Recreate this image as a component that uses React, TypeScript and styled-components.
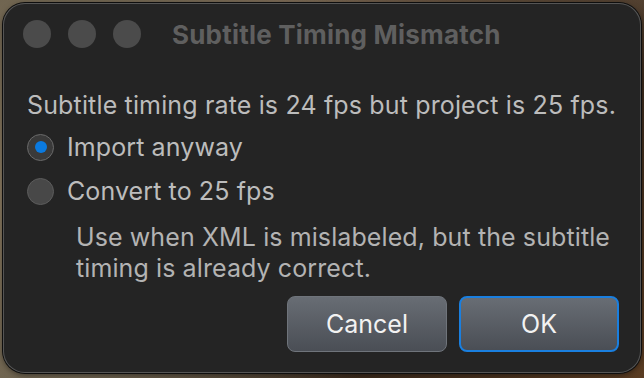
import React from "react";
import styled, { createGlobalStyle } from "styled-components";

const Global = createGlobalStyle`
  html, body { margin: 0; padding: 0; }
  body {
    width: 644px;
    height: 378px;
    overflow: hidden;
    background:
      radial-gradient(circle at 2% 50%, #8c7c62 0, #6f6450 30%, transparent 60%),
      radial-gradient(circle at 100% 100%, #5a3c22 0, #3b2a1c 40%, transparent 70%),
      linear-gradient(180deg, #7d6a55 0%, #4a3b2e 60%, #3a2e24 100%);
    font-family: Inter, "Noto Sans", sans-serif;
  }
`;

const Screen = styled.div`
  width: 644px;
  height: 378px;
  padding: 3px 3px 5px 3px;
  box-sizing: border-box;
  display: flex;
`;

const Window = styled.div`
  flex: 1;
  background: #242424;
  border-radius: 22px;
  box-shadow: 0 0 0 1px #0e0e0e, inset 0 0 0 1px #555555, 0 2px 6px rgba(0,0,0,0.5);
  display: flex;
  flex-direction: column;
`;

const TitleBar = styled.div`
  height: 62px;
  display: flex;
  align-items: center;
  padding-left: 20px;
`;

const Lights = styled.div`
  display: flex;
  gap: 17px;
`;

const Light = styled.div`
  width: 28px;
  height: 28px;
  border-radius: 50%;
  background: #4b4b4b;
`;

const Title = styled.div`
  margin-left: 31px;
  font-size: 26px;
  font-weight: 700;
  letter-spacing: 0.2px;
  color: #5f5f5f;
`;

const Body = styled.div`
  padding: 25px 22px 0 24px;
  display: flex;
  flex-direction: column;
`;

const Message = styled.div`
  font-size: 25px;
  letter-spacing: 0.15px;
  color: #bcbcbc;
  line-height: 30px;
`;

const Options = styled.div`
  display: flex;
  flex-direction: column;
  gap: 16px;
  margin-top: 13px;
`;

const Option = styled.label`
  display: flex;
  align-items: center;
  gap: 13px;
  font-size: 25px;
  letter-spacing: 0.1px;
  color: #bcbcbc;
  line-height: 28px;
`;

const Radio = styled.span<{ $checked?: boolean }>`
  width: 27px;
  height: 27px;
  border-radius: 50%;
  box-sizing: border-box;
  border: 1.5px solid ${(p) => (p.$checked ? "#6a6a6a" : "#5c5c5c")};
  background: ${(p) => (p.$checked ? "#3a3a3a" : "#484848")};
  display: flex;
  align-items: center;
  justify-content: center;
  &::after {
    content: "";
    width: 12px;
    height: 12px;
    border-radius: 50%;
    background: #0a7ae0;
    display: ${(p) => (p.$checked ? "block" : "none")};
  }
`;

const Hint = styled.div`
  margin: 17px 0 0 49px;
  font-size: 25px;
  letter-spacing: 0.1px;
  line-height: 31px;
  color: #b3b3b3;
`;

const Buttons = styled.div`
  display: flex;
  justify-content: flex-end;
  gap: 12px;
  padding-top: 12px;
`;

const Button = styled.button<{ $default?: boolean }>`
  width: 160px;
  height: 56px;
  border-radius: 8px;
  box-sizing: border-box;
  font-family: Inter, "Noto Sans", sans-serif;
  font-size: 25px;
  color: #f2f2f2;
  background: linear-gradient(180deg, #686d74 0%, #4a4e55 100%);
  border: ${(p) => (p.$default ? "2px solid #1a7fdf" : "1.5px solid #6f747b")};
  display: flex;
  align-items: center;
  justify-content: center;
  padding: 0;
`;

export default function App() {
  return (
    <>
      <Global />
      <Screen>
        <Window>
          <TitleBar>
            <Lights>
              <Light />
              <Light />
              <Light />
            </Lights>
            <Title>Subtitle Timing Mismatch</Title>
          </TitleBar>
          <Body>
            <Message>Subtitle timing rate is 24 fps but project is 25 fps.</Message>
            <Options>
              <Option>
                <Radio $checked />
                Import anyway
              </Option>
              <Option>
                <Radio />
                Convert to 25 fps
              </Option>
            </Options>
            <Hint>
              Use when XML is mislabeled, but the subtitle
              <br />
              timing is already correct.
            </Hint>
            <Buttons>
              <Button>Cancel</Button>
              <Button $default>OK</Button>
            </Buttons>
          </Body>
        </Window>
      </Screen>
    </>
  );
}
